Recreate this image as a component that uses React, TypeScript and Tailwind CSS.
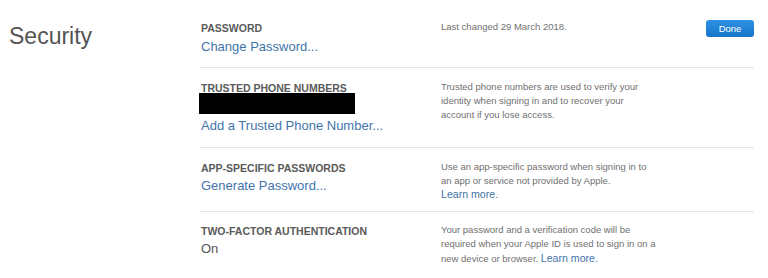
import React from 'react';

const font = { fontFamily: '"Liberation Sans", Arial, sans-serif' };

type Row = {
  label: string;
  body: React.ReactNode;
  note: React.ReactNode;
  pad: string;
};

const LearnMore = () => (
  <a href="#" className="text-[10.6px] text-[#3f74ab]">
    Learn more.
  </a>
);

const rows: Row[] = [
  {
    label: 'PASSWORD',
    body: <a href="#" className="mt-[5px] block text-[13px] leading-[16px] text-[#3f74ab]">Change Password...</a>,
    note: <p>Last changed 29 March 2018.</p>,
    pad: 'pt-[22px] pb-[12px]',
  },
  {
    label: 'TRUSTED PHONE NUMBERS',
    body: (
      <>
        <div className="mt-[-1px] ml-[-2px] h-[21px] w-[156px] bg-black" />
        <a href="#" className="mt-[4px] block text-[13px] leading-[16px] text-[#3f74ab]">Add a Trusted Phone Number...</a>
      </>
    ),
    note: (
      <p>
        Trusted phone numbers are used to verify your identity when signing in and to recover your account if you lose
        access.
      </p>
    ),
    pad: 'pt-[14px] pb-[13px]',
  },
  {
    label: 'APP-SPECIFIC PASSWORDS',
    body: <a href="#" className="mt-[4px] block text-[13px] leading-[16px] text-[#3f74ab]">Generate Password...</a>,
    note: (
      <>
        <p>Use an app-specific password when signing in to an app or service not provided by Apple.</p>
        <p className="leading-[13px]">
          <LearnMore />
        </p>
      </>
    ),
    pad: 'pt-[14px] pb-[10px]',
  },
  {
    label: 'TWO-FACTOR AUTHENTICATION',
    body: <p className="mt-[4px] text-[13px] leading-[16px] text-[#555]">On</p>,
    note: (
      <p>
        Your password and a verification code will be required when your Apple ID is used to sign in on a new device or
        browser. <LearnMore />
      </p>
    ),
    pad: 'pt-[13px] pb-[12px]',
  },
];

export default function App() {
  return (
    <div className="flex h-[278px] w-[768px] overflow-hidden bg-white" style={font}>
      <h1 className="w-[200px] shrink-0 pl-[9px] pt-[22px] text-[23px] leading-[28px] text-[#555]">Security</h1>

      <div className="w-[554px] shrink-0">
        {rows.map((row, i) => (
          <div key={row.label} className={`flex ${row.pad} ${i > 0 ? 'border-t border-[#e6e6e6]' : ''}`}>
            <div className="w-[241px] shrink-0 pl-[1px]">
              <h3 className="text-[10.5px] font-bold leading-[12px] text-[#5a5a5a]">{row.label}</h3>
              {row.body}
            </div>
            <div className="mt-[-2px] w-[216px] shrink-0 text-[9.5px] leading-[14px] text-[#707070]">{row.note}</div>
            {i === 0 && (
              <div className="flex flex-1 justify-end">
                <button className="mt-[-2px] h-[17px] w-[48px] rounded-[3px] bg-gradient-to-b from-[#2f92e4] to-[#1474c8] text-[9.5px] leading-[17px] text-white">
                  Done
                </button>
              </div>
            )}
          </div>
        ))}
      </div>
    </div>
  );
}
